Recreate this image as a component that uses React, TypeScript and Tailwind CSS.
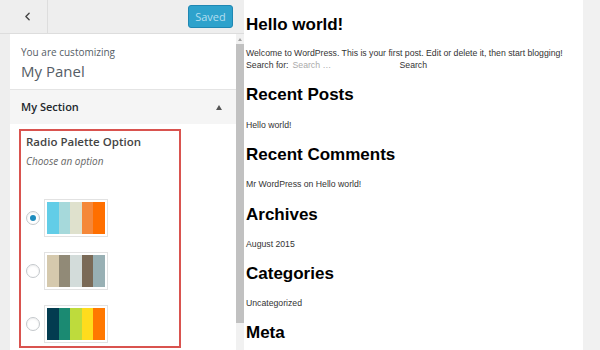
import { ChevronLeft } from "lucide-react";

type Palette = string[];

const palettes: Palette[] = [
  ["#62cde7", "#a6d9db", "#dfe1cd", "#f5883a", "#ff6f00"],
  ["#d5c9ad", "#918a77", "#d3dcda", "#7a6a57", "#98b0b4"],
  ["#033c50", "#1b8a72", "#bedb3c", "#ffdc1d", "#ff7800"],
];

const PaletteRow = ({ colors, checked }: { colors: Palette; checked?: boolean }) => (
  <div className="flex items-center">
    <span className="w-[14px] h-[14px] rounded-full border border-[#c4c8cc] bg-white flex items-center justify-center shadow-[inset_0_1px_2px_rgba(0,0,0,0.07)]">
      {checked && <span className="w-[6px] h-[6px] rounded-full bg-[#1e8cbe]" />}
    </span>
    <div className="ml-[4px] p-[2px] border border-[#e2e2e2] bg-white">
      <div className="flex w-[58px] h-[32px]">
        {colors.map((c, i) => (
          <div key={i} className="flex-1 h-full" style={{ backgroundColor: c }} />
        ))}
      </div>
    </div>
  </div>
);

const Customizer = () => (
  <aside className="w-[244px] h-full flex flex-col bg-[#eee] font-['Open_Sans',sans-serif]">
    <header className="h-[34px] flex items-center border-b border-[#ddd] shrink-0">
      <button className="w-[48px] h-full flex items-center justify-center pl-[8px] border-r border-[#ddd] text-[#444]">
        <ChevronLeft size={13} strokeWidth={2.6} />
      </button>
      <div className="flex-1" />
      <button className="mr-[11px] h-[23px] w-[45px] rounded-[3px] bg-[#2ea2cc] border border-[#1f87b3] text-[11px] text-[#b4dff0] leading-none">
        Saved
      </button>
    </header>
    <div className="flex flex-1 min-h-0">
      <div className="flex-1 ml-[10px] flex flex-col bg-white">
        <div className="h-[56px] pl-[11px] pt-[11px] border-b border-[#e4e4e4]">
          <p className="text-[10px] leading-[14px] text-[#555d66]">You are customizing</p>
          <p className="text-[15px] leading-[20px] text-[#555d66] mt-[2px]">My Panel</p>
        </div>
        <div className="h-[34px] pl-[11px] pr-[14px] bg-[#f5f5f5] flex items-center justify-between">
          <span className="text-[11px] font-semibold text-[#23282d]">My Section</span>
          <span className="w-0 h-0 border-x-[3.5px] border-x-transparent border-b-[5px] border-b-[#555]" />
        </div>
        <div className="pl-[9px] pt-[5px]">
          <div className="w-[162px] h-[219px] border-2 border-[#d9534f] pl-[5px] pt-[3px]">
            <p className="text-[11.5px] leading-[16px] font-semibold text-[#444]">Radio Palette Option</p>
            <p className="text-[10px] leading-[14px] italic text-[#666] mt-[4px]">Choose an option</p>
            <div className="mt-[31px] flex flex-col gap-[15px]">
              {palettes.map((p, i) => (
                <PaletteRow key={i} colors={p} checked={i === 0} />
              ))}
            </div>
          </div>
        </div>
      </div>
      <div className="w-[8px] bg-[#f1f1f1] flex flex-col items-center">
        <span className="mt-[4px] w-0 h-0 border-x-[2px] border-x-transparent border-b-[3px] border-b-[#a3a3a3]" />
        <div className="mt-[3px] w-full h-[279px] bg-[#c1c1c1]" />
      </div>
    </div>
  </aside>
);

const Preview = () => (
  <main className="flex-1 h-full flex bg-[#f1f1f1] font-['Liberation_Sans',Arial,sans-serif]">
    <div className="w-[339px] h-full bg-white pl-[2px] pt-[15px] text-[8.7px] leading-[12px] text-[#333]">
      <h2 className="text-[17px] leading-[20px] font-bold text-black">Hello world!</h2>
      <p className="mt-[12px]">Welcome to WordPress. This is your first post. Edit or delete it, then start blogging!</p>
      <div className="flex items-center">
        <span>Search for:</span>
        <span className="ml-[4px] w-[107px] text-[#aaa]">Search …</span>
        <span>Search</span>
      </div>
      <h2 className="mt-[14px] text-[17px] leading-[20px] font-bold text-black">Recent Posts</h2>
      <p className="mt-[14px]">Hello world!</p>
      <h2 className="mt-[14px] text-[17px] leading-[20px] font-bold text-black">Recent Comments</h2>
      <p className="mt-[13px]">Mr WordPress on Hello world!</p>
      <h2 className="mt-[15px] text-[17px] leading-[20px] font-bold text-black">Archives</h2>
      <p className="mt-[13px]">August 2015</p>
      <h2 className="mt-[14px] text-[17px] leading-[20px] font-bold text-black">Categories</h2>
      <p className="mt-[13px]">Uncategorized</p>
      <h2 className="mt-[14px] text-[17px] leading-[20px] font-bold text-black">Meta</h2>
    </div>
  </main>
);

export default function App() {
  return (
    <div className="w-[600px] h-[350px] flex overflow-hidden">
      <Customizer />
      <Preview />
    </div>
  );
}
